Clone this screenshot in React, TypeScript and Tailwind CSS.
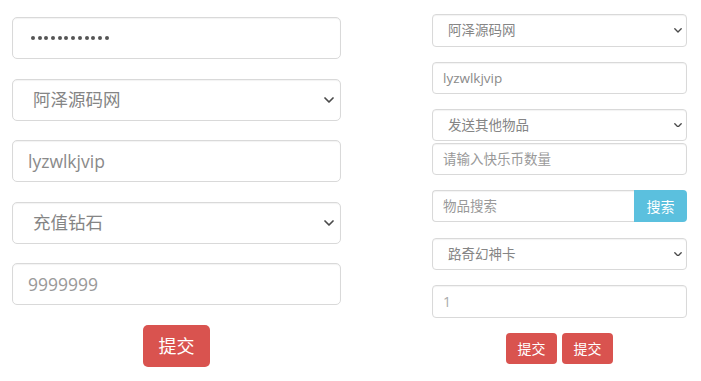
import React from "react";

const font = { fontFamily: '"Open Sans","Noto Sans CJK SC",sans-serif' };

function Chevron({ size = 10 }: { size?: number }) {
  return (
    <svg width={size} height={size * 0.6} viewBox="0 0 10 6" className="shrink-0">
      <polyline points="1,1 5,5 9,1" fill="none" stroke="#4a4a4a" strokeWidth="1.7" strokeLinecap="round" strokeLinejoin="round" />
    </svg>
  );
}

function BigBox({ children, select = false }: { children: React.ReactNode; select?: boolean }) {
  return (
    <div
      className={`flex h-[42px] w-[329px] items-center justify-between rounded-[5px] border border-[#d9d9d9] bg-white shadow-[inset_0_1px_1px_rgba(0,0,0,0.05)] ${select ? "pl-[20px] pr-[6px]" : "pl-[15px] pr-[12px]"}`}
    >
      {children}
      {select && <Chevron size={10} />}
    </div>
  );
}

function SmallBox({ children, select = false, className = "" }: { children: React.ReactNode; select?: boolean; className?: string }) {
  return (
    <div
      className={`flex h-[32px] w-[255px] items-center justify-between rounded-[4px] border border-[#d9d9d9] bg-white shadow-[inset_0_1px_1px_rgba(0,0,0,0.05)] ${select ? "pl-[15px] pr-[4px]" : "pl-[10px] pr-[10px]"} ${className}`}
    >
      {children}
      {select && <Chevron size={8} />}
    </div>
  );
}

export default function App() {
  return (
    <div className="flex h-[381px] w-[701px] items-start bg-white pl-[12px]" style={font}>
      {/* Left column */}
      <div className="mt-[17px] flex w-[329px] flex-col items-center gap-[19.5px]">
        <BigBox>
          <div className="flex items-center gap-[2.7px] pl-[3px]">
            {Array.from({ length: 12 }).map((_, i) => (
              <span key={i} className="block h-[4px] w-[4px] rounded-full bg-[#555]" />
            ))}
          </div>
        </BigBox>
        <BigBox select>
          <span className="text-[17.5px] text-[#858585]">阿泽源码网</span>
        </BigBox>
        <BigBox>
          <span className="text-[17.5px] text-[#8a8a8a]">lyzwlkjvip</span>
        </BigBox>
        <BigBox select>
          <span className="text-[17.5px] text-[#858585]">充值钻石</span>
        </BigBox>
        <BigBox>
          <span className="text-[17.5px] text-[#999]">9999999</span>
        </BigBox>
        <button className="mt-[0.5px] flex h-[42px] w-[67px] items-center justify-center rounded-[5px] bg-[#d9534f] text-[18px] text-white">
          提交
        </button>
      </div>

      {/* Right column */}
      <div className="ml-[91px] mt-[14px] flex w-[255px] flex-col items-center">
        <SmallBox select className="h-[33px]">
          <span className="text-[13.5px] text-[#858585]">阿泽源码网</span>
        </SmallBox>
        <SmallBox className="mt-[15px]">
          <span className="text-[13.5px] text-[#8a8a8a]">lyzwlkjvip</span>
        </SmallBox>
        <SmallBox select className="mt-[15px]">
          <span className="text-[13.5px] text-[#858585]">发送其他物品</span>
        </SmallBox>
        <SmallBox className="mt-[2px]">
          <span className="text-[13.5px] text-[#999]">请输入快乐币数量</span>
        </SmallBox>
        <div className="mt-[15px] flex h-[32px] w-[255px]">
          <div className="flex flex-1 items-center rounded-l-[4px] border border-r-0 border-[#d9d9d9] bg-white pl-[10px] shadow-[inset_0_1px_1px_rgba(0,0,0,0.05)]">
            <span className="text-[13.5px] text-[#999]">物品搜索</span>
          </div>
          <button className="flex h-full w-[53px] items-center justify-center rounded-r-[4px] bg-[#5bc0de] text-[14px] text-white">
            搜索
          </button>
        </div>
        <SmallBox select className="mt-[16px] h-[31px]">
          <span className="text-[13.5px] text-[#858585]">路奇幻神卡</span>
        </SmallBox>
        <SmallBox className="mt-[15px] h-[33px]">
          <span className="text-[14px] text-[#aaa]">1</span>
        </SmallBox>
        <div className="mt-[15px] flex gap-[5px]">
          <button className="flex h-[31px] w-[51px] items-center justify-center rounded-[4px] bg-[#d9534f] text-[14px] text-white">
            提交
          </button>
          <button className="flex h-[31px] w-[51px] items-center justify-center rounded-[4px] bg-[#d9534f] text-[14px] text-white">
            提交
          </button>
        </div>
      </div>
    </div>
  );
}
